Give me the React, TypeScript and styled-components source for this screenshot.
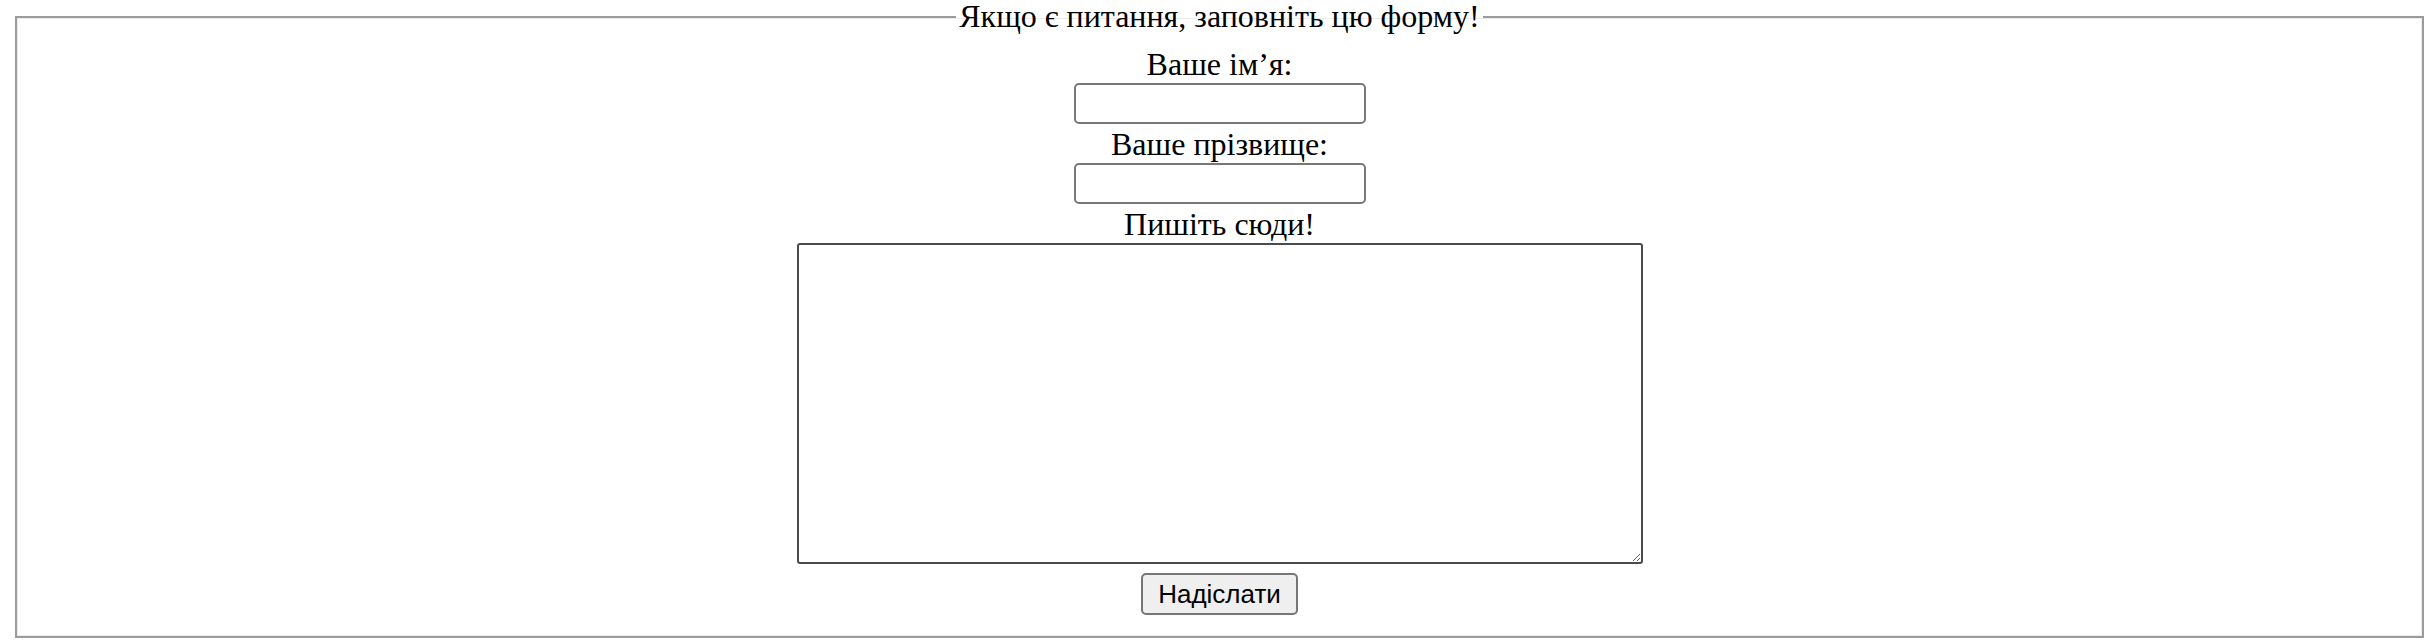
import React from 'react';
import styled, {createGlobalStyle} from 'styled-components';

const GlobalStyle = createGlobalStyle`
  html, body {
    margin: 0;
    padding: 0;
    background: #fff;
  }
  body {
    font-family: "Liberation Serif", "Times New Roman", serif;
    color: #000;
  }
`;

const Page = styled.div`
  padding: 0 3px 0 15px;
`;

const FormBox = styled.fieldset`
  margin: 0;
  padding: 12px 12px 21px;
  border: 2px solid #9b9b9b;
  box-shadow: inset 0 0 0 1px #ebebeb;
  min-width: 0;
`;

const Title = styled.legend`
  margin: 0 auto;
  padding: 0 3px;
  font-size: 32px;
  line-height: 33px;
`;

const Form = styled.form`
  display: flex;
  flex-direction: column;
  align-items: center;
`;

const Label = styled.label`
  display: block;
  font-size: 32px;
  line-height: 38px;
  text-align: center;
`;

const TextInput = styled.input`
  box-sizing: border-box;
  width: 292px;
  height: 41px;
  margin: 0 0 1px;
  padding: 2px 6px;
  border: 2px solid #787878;
  border-radius: 5px;
  background: #fff;
  font-size: 20px;
  outline: none;
`;

const Message = styled.textarea`
  box-sizing: border-box;
  width: 846px;
  height: 321px;
  margin: 0;
  padding: 3px;
  border: 2px solid #4b4b4b;
  border-radius: 3px;
  background: #fff;
  font-size: 20px;
  outline: none;
`;

const SendButton = styled.button`
  box-sizing: border-box;
  width: 157px;
  height: 42px;
  margin-top: 9px;
  padding: 0;
  border: 2px solid #767676;
  border-radius: 5px;
  background: #efefef;
  font-family: "Liberation Sans", Arial, sans-serif;
  font-size: 26px;
  color: #000;
`;

const App: React.FC = () => {
	return (
		<>
			<GlobalStyle/>
			<Page>
				<FormBox>
					<Title>Якщо є питання, заповніть цю форму!</Title>
					<Form onSubmit={e => e.preventDefault()}>
						<Label htmlFor="name">Ваше ім’я:</Label>
						<TextInput id="name" type="text"/>
						<Label htmlFor="surname">Ваше прізвище:</Label>
						<TextInput id="surname" type="text"/>
						<Label htmlFor="message">Пишіть сюди!</Label>
						<Message id="message"/>
						<SendButton type="submit">Надіслати</SendButton>
					</Form>
				</FormBox>
			</Page>
		</>
	);
};

export default App;
